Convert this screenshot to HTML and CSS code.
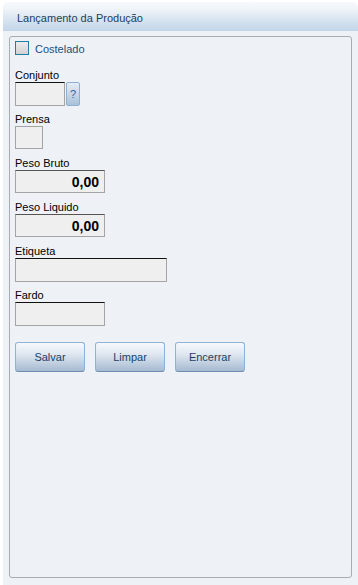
FILE: index.html
```html
<!DOCTYPE html>
<html>
<head>
<meta charset="utf-8">
<link rel="stylesheet" href="styles.css">
</head>
<body>
<div class="panel">
  <div class="header">Lançamento da Produção</div>
  <div class="body">
    <div class="fieldset">
      <label class="check-row">
        <span class="checkbox"></span>
        <span class="check-label">Costelado</span>
      </label>
      <div class="field first">
        <div class="label">Conjunto</div>
        <div class="row">
          <div class="input w50"></div>
          <div class="help">?</div>
        </div>
      </div>
      <div class="field">
        <div class="label">Prensa</div>
        <div class="input w28 gray-top"></div>
      </div>
      <div class="field">
        <div class="label">Peso Bruto</div>
        <div class="input w90 num">0,00</div>
      </div>
      <div class="field">
        <div class="label">Peso Liquido</div>
        <div class="input w90 num">0,00</div>
      </div>
      <div class="field">
        <div class="label">Etiqueta</div>
        <div class="input w152"></div>
      </div>
      <div class="field">
        <div class="label">Fardo</div>
        <div class="input w90"></div>
      </div>
      <div class="buttons">
        <div class="btn">Salvar</div>
        <div class="btn">Limpar</div>
        <div class="btn">Encerrar</div>
      </div>
    </div>
  </div>
</div>
</body>
</html>
```

FILE: styles.css
```css
html, body {
  margin: 0;
  padding: 0;
  background: #ffffff;
  font-family: "Liberation Sans", Arial, sans-serif;
}

.panel {
  margin: 2px 0 0 3px;
  width: 355px;
  height: 583px;
  border-radius: 6px 6px 0 0;
  overflow: hidden;
  display: flex;
  flex-direction: column;
  background: #eef2f7;
}

.header {
  height: 29px;
  flex: none;
  box-sizing: border-box;
  padding: 10px 0 0 14px;
  font-size: 11px;
  line-height: 13px;
  color: #1f3d5c;
  background: linear-gradient(#f6f9fc 0%, #f1f5fa 22%, #d8e4f0 60%, #c2d5e8 100%);
}

.body {
  flex: 1;
  padding: 5px 6px 5px 6px;
  display: flex;
  flex-direction: column;
}

.fieldset {
  box-sizing: border-box;
  height: 542px;
  border: 1px solid #a9adb2;
  border-radius: 3px;
  padding: 4px 0 0 5px;
  display: flex;
  flex-direction: column;
}

.check-row {
  display: flex;
  align-items: center;
  height: 14px;
}

.checkbox {
  box-sizing: border-box;
  width: 14px;
  height: 14px;
  border: 1px solid #1f7fa2;
  background: linear-gradient(#ececec, #d2d2d2);
}

.check-label {
  margin-left: 6px;
  font-size: 11px;
  color: #1b4f7c;
  position: relative;
  top: 1px;
}

.field {
  display: flex;
  flex-direction: column;
  margin-top: 7px;
}

.field.first {
  margin-top: 14px;
}

.label {
  height: 13px;
  font-size: 11px;
  line-height: 13px;
  color: #000;
}

.row {
  display: flex;
  gap: 1px;
}

.input {
  box-sizing: border-box;
  height: 24px;
  background: #efefef;
  border: 1px solid #a4a4a4;
  border-top-color: #111;
}

.input.gray-top {
  border-top-color: #a4a4a4;
  height: 23px;
  margin-bottom: 1px;
}

.w50 { width: 50px; }
.w28 { width: 28px; }
.w90 { width: 90px; }
.w152 { width: 152px; }

.num {
  height: 23px;
  margin-bottom: 1px;
  border-top-color: #555;
  text-align: right;
  padding-right: 5px;
  font-size: 14px;
  font-weight: bold;
  line-height: 22px;
  color: #000;
}

.help {
  box-sizing: border-box;
  width: 14px;
  height: 24px;
  border: 1px solid #8fb0d2;
  border-radius: 2px;
  background: linear-gradient(#e4edf7, #a9c1da);
  color: #2a64a6;
  font-size: 11px;
  text-align: center;
  line-height: 22px;
}

.buttons {
  display: flex;
  gap: 10px;
  margin-top: 16px;
}

.btn {
  box-sizing: border-box;
  width: 70px;
  height: 30px;
  border: 1px solid #8fb2d6;
  border-bottom-color: #6e8db0;
  border-radius: 3px;
  background: linear-gradient(#f7f9fc 0%, #dfe7f0 40%, #a6bad1 100%);
  color: #1e3f66;
  font-size: 11px;
  line-height: 28px;
  text-align: center;
}
```
